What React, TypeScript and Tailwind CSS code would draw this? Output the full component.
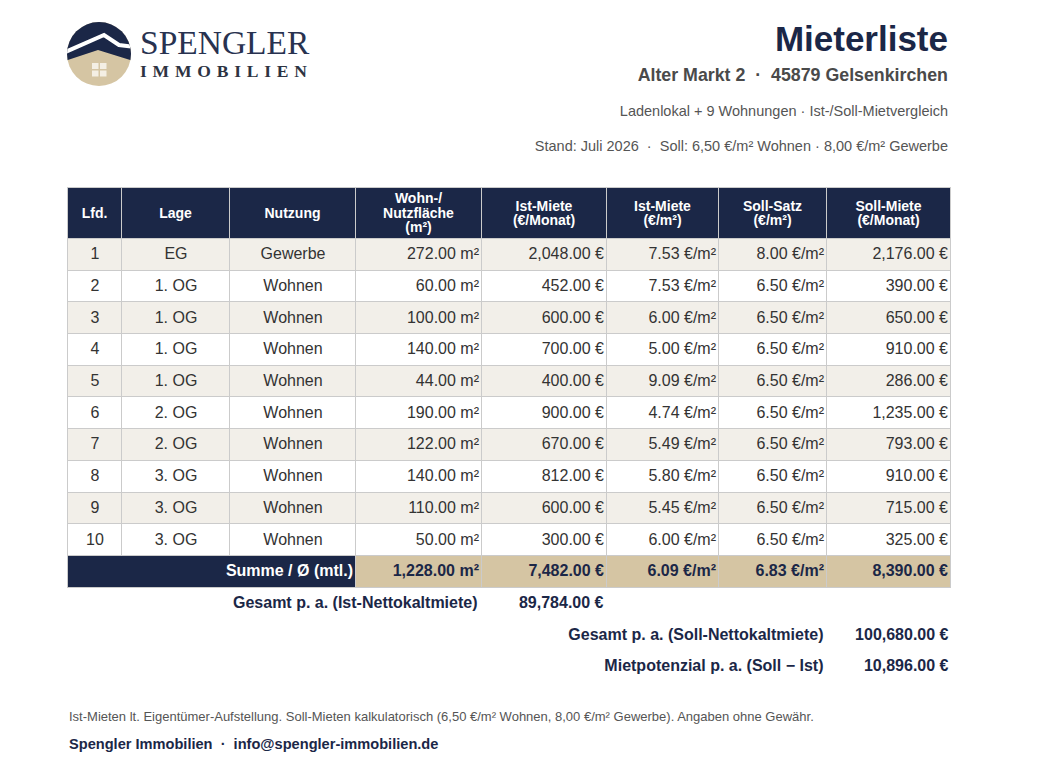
import React from 'react';

const NAVY = '#1b2747';

const rows: string[][] = [
  ['1', 'EG', 'Gewerbe', '272.00 m²', '2,048.00 €', '7.53 €/m²', '8.00 €/m²', '2,176.00 €'],
  ['2', '1. OG', 'Wohnen', '60.00 m²', '452.00 €', '7.53 €/m²', '6.50 €/m²', '390.00 €'],
  ['3', '1. OG', 'Wohnen', '100.00 m²', '600.00 €', '6.00 €/m²', '6.50 €/m²', '650.00 €'],
  ['4', '1. OG', 'Wohnen', '140.00 m²', '700.00 €', '5.00 €/m²', '6.50 €/m²', '910.00 €'],
  ['5', '1. OG', 'Wohnen', '44.00 m²', '400.00 €', '9.09 €/m²', '6.50 €/m²', '286.00 €'],
  ['6', '2. OG', 'Wohnen', '190.00 m²', '900.00 €', '4.74 €/m²', '6.50 €/m²', '1,235.00 €'],
  ['7', '2. OG', 'Wohnen', '122.00 m²', '670.00 €', '5.49 €/m²', '6.50 €/m²', '793.00 €'],
  ['8', '3. OG', 'Wohnen', '140.00 m²', '812.00 €', '5.80 €/m²', '6.50 €/m²', '910.00 €'],
  ['9', '3. OG', 'Wohnen', '110.00 m²', '600.00 €', '5.45 €/m²', '6.50 €/m²', '715.00 €'],
  ['10', '3. OG', 'Wohnen', '50.00 m²', '300.00 €', '6.00 €/m²', '6.50 €/m²', '325.00 €'],
];

function Logo() {
  return (
    <svg width="64" height="64" viewBox="0 0 64 64" className="shrink-0">
      <defs>
        <clipPath id="lc">
          <circle cx="32" cy="32" r="32" />
        </clipPath>
      </defs>
      <g clipPath="url(#lc)">
        <rect x="0" y="0" width="64" height="64" fill="#d5c5a3" />
        <polygon points="-2,-2 66,-2 66,39 31,28 -2,39" fill={NAVY} />
        <polyline points="-4,31 37,13 52,23 68,25" fill="none" stroke="#ffffff" strokeWidth="4" strokeLinejoin="miter" />
        <rect x="25" y="41" width="6.5" height="6" fill="#f4efe4" />
        <rect x="33" y="41" width="6.5" height="6" fill="#f4efe4" />
        <rect x="25" y="48.5" width="6.5" height="6" fill="#f4efe4" />
        <rect x="33" y="48.5" width="6.5" height="6" fill="#f4efe4" />
      </g>
    </svg>
  );
}

export default function App() {
  const cellB = 'border border-[#cbcbcb]';
  return (
    <div className="w-[1054px] h-[770px] bg-white font-['Liberation_Sans',Arial,sans-serif] overflow-hidden">
      <div className="ml-[67px] w-[883px]">
        {/* Header */}
        <div className="flex justify-between h-[187px]">
          <div className="flex items-start pt-[22px]">
            <Logo />
            <div className="ml-[9px] flex flex-col pt-[4px] font-['Liberation_Serif','Times_New_Roman',serif] text-[#283250]">
              <div className="text-[33.5px] leading-[34px] tracking-[0px]">SPENGLER</div>
              <div className="text-[17.5px] leading-[20px] font-bold tracking-[5.8px] mt-[1px] text-[#2d3342]">IMMOBILIEN</div>
            </div>
          </div>
          <div className="flex flex-col items-end pr-[2px] pt-[19px]">
            <div className="text-[35px] leading-[40px] font-bold text-[#1b2747]">Mieterliste</div>
            <div className="text-[17.8px] leading-[24px] font-bold text-[#4a4a4a] mt-[4px]">
              Alter Markt 2&nbsp; · &nbsp;45879 Gelsenkirchen
            </div>
            <div className="text-[14.5px] leading-[18px] text-[#555555] mt-[15px]">
              Ladenlokal + 9 Wohnungen · Ist-/Soll-Mietvergleich
            </div>
            <div className="text-[14.5px] leading-[18px] text-[#555555] mt-[17px]">
              Stand: Juli 2026&nbsp; · &nbsp;Soll: 6,50 €/m² Wohnen · 8,00 €/m² Gewerbe
            </div>
          </div>
        </div>

        {/* Table */}
        <table className="border-collapse table-fixed w-[883px]">
          <colgroup>
            <col className="w-[54px]" />
            <col className="w-[108px]" />
            <col className="w-[126px]" />
            <col className="w-[126px]" />
            <col className="w-[125px]" />
            <col className="w-[112px]" />
            <col className="w-[108px]" />
            <col className="w-[124px]" />
          </colgroup>
          <thead>
            <tr className="h-[51px]">
              {[
                ['Lfd.'],
                ['Lage'],
                ['Nutzung'],
                ['Wohn-/', 'Nutzfläche', '(m²)'],
                ['Ist-Miete', '(€/Monat)'],
                ['Ist-Miete', '(€/m²)'],
                ['Soll-Satz', '(€/m²)'],
                ['Soll-Miete', '(€/Monat)'],
              ].map((lines, i) => (
                <th key={i} className={`${cellB} bg-[#1b2747] text-white font-bold text-[14px] leading-[14.5px] text-center align-middle px-[2px]`}>
                  {lines.map((l, j) => (
                    <div key={j}>{l}</div>
                  ))}
                </th>
              ))}
            </tr>
          </thead>
          <tbody>
            {rows.map((r, i) => (
              <tr key={i} className={`h-[31.7px] ${i % 2 === 0 ? 'bg-[#f2efe9]' : 'bg-white'}`}>
                {r.map((c, j) => (
                  <td
                    key={j}
                    className={`${cellB} text-[16px] leading-[18px] text-[#333333] px-[3px] pr-[2px] ${j < 3 ? 'text-center' : 'text-right'}`}
                  >
                    {c}
                  </td>
                ))}
              </tr>
            ))}
            <tr className="h-[32px]">
              <td colSpan={3} className={`${cellB} bg-[#1b2747] text-white font-bold text-[16px] text-right pr-[2px]`}>
                Summe / Ø (mtl.)
              </td>
              {['1,228.00 m²', '7,482.00 €', '6.09 €/m²', '6.83 €/m²', '8,390.00 €'].map((c, j) => (
                <td key={j} className={`${cellB} bg-[#d5c5a3] text-[#1b2747] font-bold text-[16px] text-right pr-[2px]`}>
                  {c}
                </td>
              ))}
            </tr>
            <tr className="h-[31.6px]">
              <td colSpan={4} className="text-right pr-[4px] font-bold text-[16px] text-[#1b2747]">
                Gesamt p. a. (Ist-Nettokaltmiete)
              </td>
              <td className="text-right pr-[3px] font-bold text-[16px] text-[#1b2747]">89,784.00 €</td>
              <td colSpan={3}></td>
            </tr>
            <tr className="h-[31.6px]">
              <td colSpan={7} className="text-right pr-[3px] font-bold text-[16px] text-[#1b2747]">
                Gesamt p. a. (Soll-Nettokaltmiete)
              </td>
              <td className="text-right pr-[2px] font-bold text-[16px] text-[#1b2747]">100,680.00 €</td>
            </tr>
            <tr className="h-[31.6px]">
              <td colSpan={7} className="text-right pr-[3px] font-bold text-[16px] text-[#1b2747]">
                Mietpotenzial p. a. (Soll − Ist)
              </td>
              <td className="text-right pr-[2px] font-bold text-[16px] text-[#1b2747]">10,896.00 €</td>
            </tr>
          </tbody>
        </table>

        {/* Footer */}
        <div className="mt-[27px] pl-[2px] text-[13px] leading-[16px] text-[#555555]">
          Ist-Mieten lt. Eigentümer-Aufstellung. Soll-Mieten kalkulatorisch (6,50 €/m² Wohnen, 8,00 €/m² Gewerbe). Angaben ohne Gewähr.
        </div>
        <div className="mt-[10px] pl-[2px] text-[14.6px] leading-[18px] font-bold text-[#1b2747]">
          Spengler Immobilien&nbsp; · &nbsp;info@spengler-immobilien.de
        </div>
      </div>
    </div>
  );
}
